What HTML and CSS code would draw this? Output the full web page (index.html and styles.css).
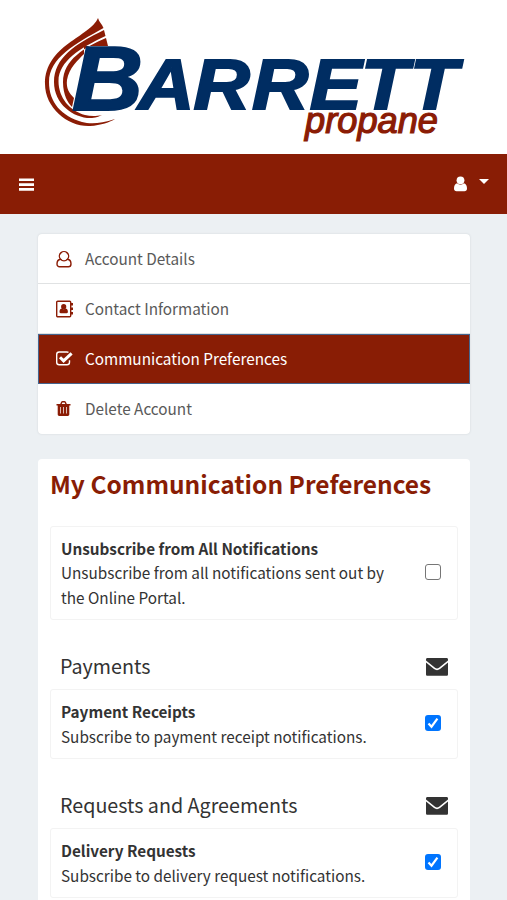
FILE: index.html
```html
<!DOCTYPE html>
<html lang="en">
<head>
<meta charset="utf-8">
<title>My Communication Preferences</title>
<link rel="stylesheet" href="styles.css">
</head>
<body>
<header class="brand">
  <svg class="logo" viewBox="0 0 507 154" role="img" aria-label="Barrett Propane">
    <g class="flame">
      <path d="M98 18C90 37 45 45 45 84C45 108 68 127 90 126C101 125.500 110 122 115 119C100 124 90 124 82 122C62 116 49 103 49 82C49 58 75 44 103.500 28C102 24 99 22 98 18Z"/>
      <path d="M104 30C75 44 54 58 54 82C54 105 75 119 92 118C97 117.500 100 116 102 115C95 116.500 90 116 85 115C70 111 58.500 98 58.500 81C59 61 80 48 105.500 36Z"/>
      <path d="M106 38C85 47 63 60 63 82C63 95 68 103 72 107L74 98C69 93 66 88 67 80C69 68 78 60 84 54V46H108Z"/>
    </g>
    <g class="wordmark">
      <text x="72" y="109.500" font-size="91" textLength="71" lengthAdjust="spacingAndGlyphs">B</text>
      <text transform="scale(1.1 1)" x="125.500 176 229 281.500 328 372.500" y="109.300" font-size="71">ARRETT</text>
    </g>
    <text class="tagline" x="305" y="132.500" font-size="36" textLength="133" lengthAdjust="spacingAndGlyphs">propane</text>
  </svg>
</header>
<nav class="topbar">
  <svg class="bars" viewBox="0 0 15 13"><path d="M0 .4h15v2.700H0zM0 5.200h15v2.700H0zM0 10h15v2.700H0z"/></svg>
  <div class="account">
    <svg class="user" viewBox="0 0 13 16"><circle cx="6.500" cy="4.300" r="3.900"/><path d="M3 7.300C.8 8 0 10 0 12.600C0 14.300 1 15.300 2.500 15.300h8c1.500 0 2.500-1 2.500-2.700C13 10 12.200 8 10 7.300C8 9.200 5 9.200 3 7.300Z"/></svg>
    <svg class="caret" viewBox="0 0 10 5"><path d="M0 0h10L5 5z"/></svg>
  </div>
</nav>
<main class="content">
  <ul class="menu">
    <li class="menu-item">
      <svg viewBox="0 0 18 18"><g class="line"><path d="M5.500 9.200a4.600 4.600 0 1 1 7 0C15 9.500 16 11.500 16 14c0 1.800-1.200 2.800-2.600 2.800H4.600C3.200 16.800 2 15.800 2 14c0-2.500 1-4.500 3.500-4.800Z"/><path d="M5.500 9.200c2 2 5 2 7 0"/></g></svg>
      <span>Account Details</span>
    </li>
    <li class="menu-item">
      <svg viewBox="0 0 18 18"><rect class="line" x="1.700" y="1.200" width="14" height="15.600" rx="1"/><path d="M16 3h2v2.500h-2zM16 7.500h2V10h-2zM16 12h2v2.500h-2z"/><circle cx="8.700" cy="6.700" r="2.600"/><path d="M6.500 8.500C5 8.800 4.500 10.200 4.500 12c0 .7.500 1.200 1.200 1.200h6c.7 0 1.200-.5 1.200-1.200c0-1.800-.5-3.200-2-3.500c-1.300 1.100-3 1.100-4.400 0Z"/></svg>
      <span>Contact Information</span>
    </li>
    <li class="menu-item active">
      <svg viewBox="0 0 18 18"><path class="line" d="M13.500 2.300C13 2 12.500 2 12 2H4.200C2.700 2 1.700 3 1.700 4.500v7.700c0 1.500 1 2.500 2.500 2.500H12c1.500 0 2.500-1 2.500-2.500v-2"/><path class="tick" d="M5 7.300l3.600 3.600 8-7.600"/></svg>
      <span>Communication Preferences</span>
    </li>
    <li class="menu-item">
      <svg viewBox="0 0 18 18"><path fill-rule="evenodd" d="M1.500 4h3.700l1-2.200C6.400 1.300 7 1 7.500 1h2c.5 0 1.100.3 1.300.8l1 2.200h3.700v1.500h-1.200v8.800c0 1-.7 1.700-1.500 1.700H4.200c-.8 0-1.500-.7-1.500-1.700V5.500H1.500zM6.700 4h3.600l-.7-1.600H7.400zM5 7v6.500h.7V7zm3.100 0v6.500h.7V7zm3.100 0v6.500h.7V7z"/></svg>
      <span>Delete Account</span>
    </li>
  </ul>
  <section class="panel">
    <h1>My Communication Preferences</h1>
    <div class="pref">
      <div class="copy"><strong>Unsubscribe from All Notifications</strong><p>Unsubscribe from all notifications sent out by the Online Portal.</p></div>
      <span class="check"></span>
    </div>
    <div class="group">
      <h2>Payments</h2>
      <svg class="mail" viewBox="0 0 22 18"><path d="M1.500 0h19C21.500 0 22 .6 22 1.500v1L13 9.800c-1.300 1-2.700 1-4 0L0 2.500v-1C0 .6.500 0 1.500 0ZM0 4.500l8 6.600c2 1.500 4 1.500 6 0l8-6.600v11.700c0 1-.6 1.600-1.500 1.600h-19C.6 17.800 0 17.200 0 16.200Z"/></svg>
    </div>
    <div class="pref short">
      <div class="copy"><strong>Payment Receipts</strong><p>Subscribe to payment receipt notifications.</p></div>
      <span class="check on"><svg viewBox="0 0 16 16"><path d="M3.500 8.500l3 3.200 5.900-8"/></svg></span>
    </div>
    <div class="group">
      <h2>Requests and Agreements</h2>
      <svg class="mail" viewBox="0 0 22 18"><path d="M1.500 0h19C21.500 0 22 .6 22 1.500v1L13 9.800c-1.300 1-2.700 1-4 0L0 2.500v-1C0 .6.500 0 1.500 0ZM0 4.500l8 6.600c2 1.500 4 1.500 6 0l8-6.600v11.700c0 1-.6 1.600-1.500 1.600h-19C.6 17.800 0 17.200 0 16.200Z"/></svg>
    </div>
    <div class="pref short">
      <div class="copy"><strong>Delivery Requests</strong><p>Subscribe to delivery request notifications.</p></div>
      <span class="check on"><svg viewBox="0 0 16 16"><path d="M3.500 8.500l3 3.200 5.900-8"/></svg></span>
    </div>
  </section>
</main>
</body>
</html>
```

FILE: styles.css
```css
* { box-sizing: border-box; }
body {
  margin: 0;
  background: #ecf0f3;
  color: #333;
  font: 15.310px/24.500px "Noto Sans CJK SC", sans-serif;
}
.brand { height: 154px; background: #fff; }
.logo { display: block; width: 507px; height: 154px; }
.flame { fill: #8b1c05; }
.wordmark { font-family: "Liberation Sans", sans-serif; font-weight: bold; font-style: italic; fill: #002d62; stroke: #002d62; stroke-width: 2; }
.tagline { font-family: "Liberation Sans", sans-serif; font-style: italic; fill: #8b1c05; stroke: #8b1c05; stroke-width: 1.200; }
.topbar {
  display: flex;
  justify-content: space-between;
  align-items: center;
  height: 60px;
  padding: 0 18px 0 19px;
  background: #891d05;
  fill: #fff;
}
.bars { width: 15px; height: 13px; }
.account { display: flex; align-items: center; gap: 12px; }
.user { width: 13px; height: 16px; }
.caret { width: 10px; height: 5px; margin-bottom: 5px; }
.content { padding: 20px 37px 0 38px; }
.menu {
  list-style: none;
  margin: 0 0 25px;
  padding: 0;
  border-radius: 4px;
  background: #fff;
  box-shadow: 0 0 2px #ccd0d3;
}
.menu-item {
  display: flex;
  align-items: center;
  gap: 12px;
  height: 50px;
  padding-left: 17px;
  color: #5a5a5a;
  border-bottom: 1px solid #e0e2e3;
}
.menu-item:last-child { border-bottom: 0; padding-bottom: 1px; }
.menu-item svg { width: 18px; height: 18px; fill: #8b1c05; stroke: none; }
.menu-item .line { fill: none; stroke: #8b1c05; stroke-width: 1.400; }
.menu-item.active { background: #891d05; color: #fff; border: 1px solid #44658f; padding: 0 0 1px 16px; }
.active svg .line, .active svg .tick { fill: none; stroke: #fff; }
.active svg .tick { stroke-width: 3; }
.panel { height: 441px; padding: 7px 12px 0; background: #fff; border-radius: 4px 4px 0 0; }
h1 { margin: 0 0 25px; font-size: 24.480px; line-height: 35px; font-weight: bold; color: #891d05; white-space: nowrap; }
.pref {
  display: flex;
  justify-content: space-between;
  align-items: center;
  height: 94px;
  padding: 0 16px 1px 10px;
  border: 1px solid #f3f3f3;
  border-radius: 3px;
}
.pref.short { height: 70px; }
.copy { width: 330px; white-space: nowrap; }
.copy strong { display: block; }
.copy p { margin: 0; white-space: normal; }
.check { width: 16px; height: 16px; border: 1.500px solid #767676; border-radius: 3px; margin-bottom: 1px; }
.check.on { border: 0; background: #0075ff; }
.check svg { display: block; fill: none; stroke: #fff; stroke-width: 2.200; }
.group {
  display: flex;
  justify-content: space-between;
  align-items: center;
  height: 45px;
  margin-top: 24px;
  padding: 0 10px;
}
h2 { margin: 0 0 2px; font-size: 19.700px; line-height: 28px; font-weight: normal; }
.mail { width: 22px; height: 18px; fill: #333; }
```
